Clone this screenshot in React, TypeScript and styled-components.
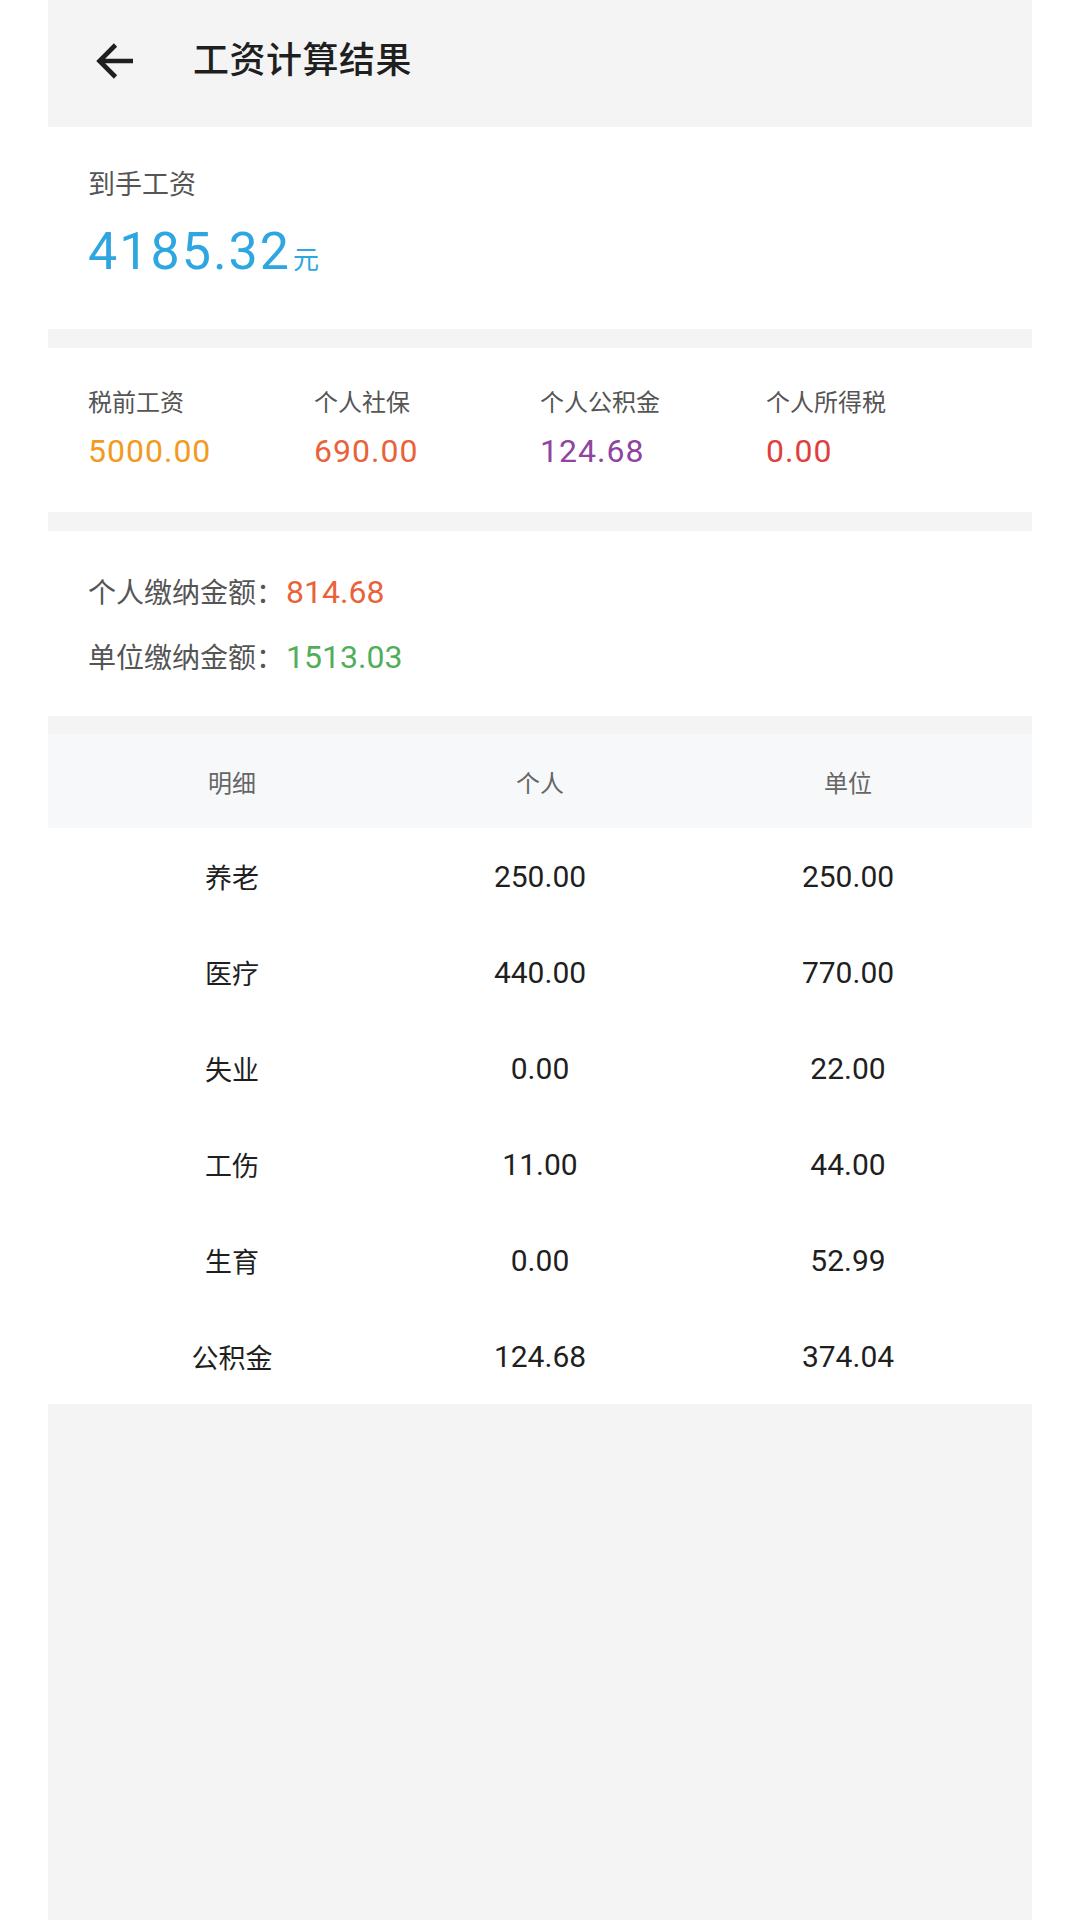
import React from "react";
import styled, { createGlobalStyle } from "styled-components";

const Global = createGlobalStyle`
  html, body {
    margin: 0;
    padding: 0;
    background: #ffffff;
  }
  body {
    font-family: Roboto, "Noto Sans CJK SC", sans-serif;
    -webkit-font-smoothing: antialiased;
  }
`;

const Page = styled.div`
  width: 984px;
  min-height: 1920px;
  margin: 0 48px;
  background: #f4f4f4;
  display: flex;
  flex-direction: column;
`;

const TopBar = styled.div`
  height: 127px;
  display: flex;
  align-items: center;
  padding-left: 48px;
  gap: 58px;
  box-sizing: border-box;
`;

const BackIcon = styled.svg`
  width: 39px;
  height: 38px;
  display: block;
  margin-top: -6px;
`;

const Title = styled.div`
  font-size: 36px;
  font-weight: 500;
  color: #1f1f1f;
  line-height: 40px;
  margin-top: -6px;
  letter-spacing: 0.5px;
`;

const Card = styled.div<{ $pt: number; $pb: number; $mt?: number }>`
  background: #ffffff;
  padding: ${(p) => p.$pt}px 40px ${(p) => p.$pb}px 40px;
  margin-top: ${(p) => p.$mt ?? 0}px;
`;

const NetLabel = styled.div`
  font-size: 27px;
  line-height: 36px;
  color: #555;
`;

const NetAmount = styled.div`
  margin-top: 17px;
  line-height: 64px;
  color: #2ea6df;
  display: flex;
  align-items: baseline;
`;

const NetValue = styled.span`
  font-size: 52px;
  letter-spacing: 2px;
`;

const NetUnit = styled.span`
  font-size: 26px;
  margin-left: 2px;
`;

const StatGrid = styled.div`
  display: grid;
  grid-template-columns: repeat(4, 1fr);
`;

const Stat = styled.div`
  display: flex;
  flex-direction: column;
  gap: 12px;
`;

const StatLabel = styled.div`
  font-size: 24px;
  line-height: 32px;
  color: #555;
`;

const StatValue = styled.div<{ $color: string }>`
  font-size: 32px;
  line-height: 40px;
  letter-spacing: 1px;
  color: ${(p) => p.$color};
`;

const PayList = styled.div`
  display: flex;
  flex-direction: column;
  gap: 21px;
`;

const PayRow = styled.div`
  display: flex;
  align-items: baseline;
  height: 44px;
  line-height: 44px;
`;

const PayLabel = styled.span`
  font-size: 28px;
  color: #555;
`;

const PayValue = styled.span<{ $color: string }>`
  font-size: 32px;
  color: ${(p) => p.$color};
  margin-left: 2px;
`;

const Table = styled.div`
  margin-top: 18px;
  background: #ffffff;
  display: flex;
  flex-direction: column;
`;

const HeadRow = styled.div`
  height: 94px;
  background: #f7f8fa;
  display: grid;
  grid-template-columns: repeat(3, 1fr);
  padding: 0 30px;
  align-items: center;
`;

const HeadCell = styled.div`
  text-align: center;
  font-size: 24px;
  color: #666;
`;

const BodyRow = styled.div`
  height: 96px;
  display: grid;
  grid-template-columns: repeat(3, 1fr);
  padding: 0 30px;
  align-items: center;
`;

const Cell = styled.div<{ $name?: boolean }>`
  text-align: center;
  font-size: ${(p) => (p.$name ? 27 : 30)}px;
  color: #1f1f1f;
`;

const stats = [
  { label: "税前工资", value: "5000.00", color: "#f39a1e" },
  { label: "个人社保", value: "690.00", color: "#e9623a" },
  { label: "个人公积金", value: "124.68", color: "#8e44a0" },
  { label: "个人所得税", value: "0.00", color: "#e0403c" },
];

const rows = [
  ["养老", "250.00", "250.00"],
  ["医疗", "440.00", "770.00"],
  ["失业", "0.00", "22.00"],
  ["工伤", "11.00", "44.00"],
  ["生育", "0.00", "52.99"],
  ["公积金", "124.68", "374.04"],
];

export default function App() {
  return (
    <>
      <Global />
      <Page>
        <TopBar>
          <BackIcon viewBox="0 0 39 38" fill="none">
            <path
              d="M37 19H4M19.5 3L3.5 19L19.5 35"
              stroke="#1f1f1f"
              strokeWidth="4.6"
              strokeLinecap="butt"
              strokeLinejoin="miter"
            />
          </BackIcon>
          <Title>工资计算结果</Title>
        </TopBar>

        <Card $pt={40} $pb={37}>
          <NetLabel>到手工资</NetLabel>
          <NetAmount>
            <NetValue>4185.32</NetValue>
            <NetUnit>元</NetUnit>
          </NetAmount>
        </Card>

        <Card $pt={39} $pb={41} $mt={19}>
          <StatGrid>
            {stats.map((s) => (
              <Stat key={s.label}>
                <StatLabel>{s.label}</StatLabel>
                <StatValue $color={s.color}>{s.value}</StatValue>
              </Stat>
            ))}
          </StatGrid>
        </Card>

        <Card $pt={39} $pb={37} $mt={19}>
          <PayList>
            <PayRow>
              <PayLabel>个人缴纳金额：</PayLabel>
              <PayValue $color="#e9623a">814.68</PayValue>
            </PayRow>
            <PayRow>
              <PayLabel>单位缴纳金额：</PayLabel>
              <PayValue $color="#52ad5a">1513.03</PayValue>
            </PayRow>
          </PayList>
        </Card>

        <Table>
          <HeadRow>
            <HeadCell>明细</HeadCell>
            <HeadCell>个人</HeadCell>
            <HeadCell>单位</HeadCell>
          </HeadRow>
          {rows.map((r) => (
            <BodyRow key={r[0]}>
              <Cell $name>{r[0]}</Cell>
              <Cell>{r[1]}</Cell>
              <Cell>{r[2]}</Cell>
            </BodyRow>
          ))}
        </Table>
      </Page>
    </>
  );
}
